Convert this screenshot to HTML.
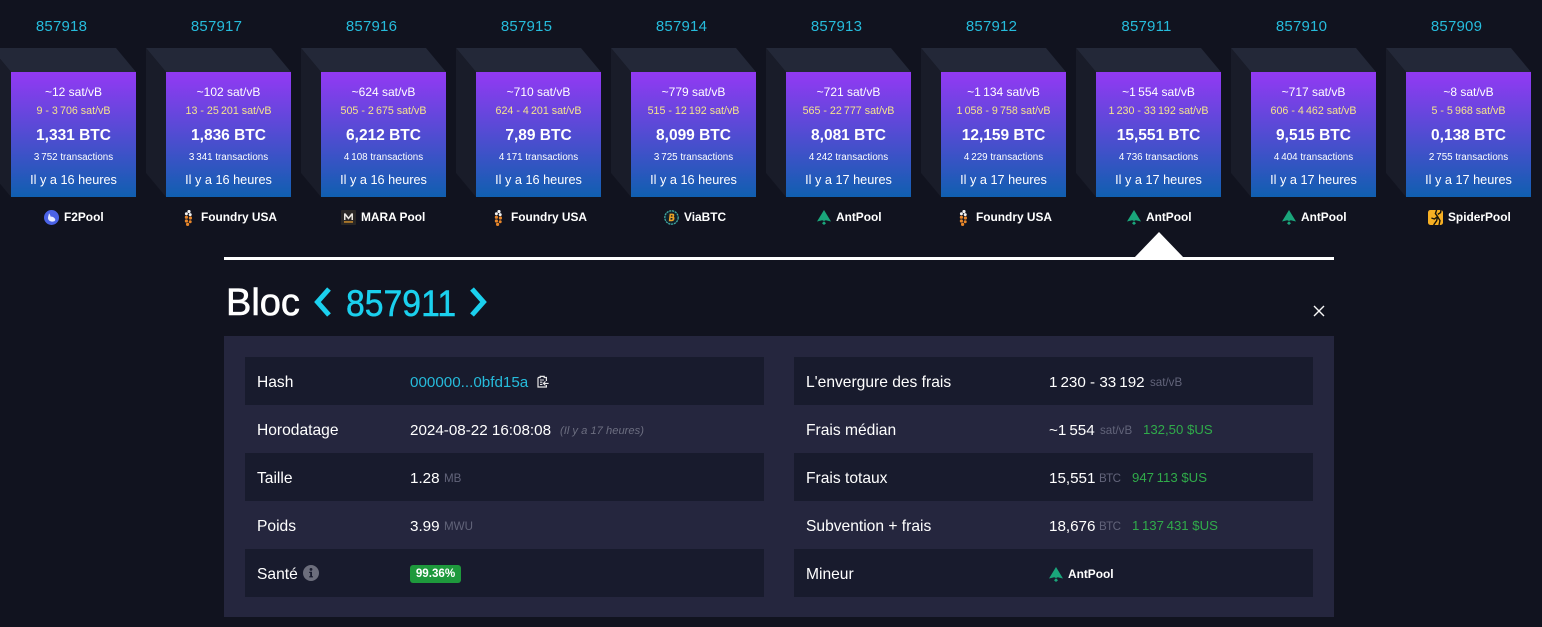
<!DOCTYPE html>
<html lang="fr">
<head>
<meta charset="utf-8">
<title>Bloc 857911</title>
<style>
html,body{margin:0;padding:0;background:#11131f;}
body{position:relative;width:1542px;height:627px;overflow:hidden;font-family:"Liberation Sans",sans-serif;color:#fff;}
.b{position:absolute;top:0;width:145px;height:230px;}
.b svg.c{position:absolute;left:0;top:48px;}
.n{position:absolute;left:0;width:141px;top:18px;line-height:18px;text-align:center;font-size:15px;letter-spacing:.2px;color:#26bcdc;}
.f{position:absolute;left:20px;top:72px;width:125px;height:125px;background:linear-gradient(#9339f4,#105fb0);text-align:center;}
.f div{position:absolute;left:-5px;right:-5px;white-space:nowrap;text-align:center;}
.a{top:12px;line-height:16px;font-size:12px;}
.r{top:31px;line-height:16px;font-size:10.7px;color:#f4e58c;}
.m{top:54px;line-height:20px;font-size:15.5px;font-weight:bold;}
.x{top:79px;line-height:14px;font-size:9.8px;}
.w{top:100px;line-height:16px;font-size:12.7px;}
.pn{position:absolute;top:209px;line-height:16px;font-size:11.9px;font-weight:bold;white-space:nowrap;}
.ic{position:absolute;}
.s{position:absolute;white-space:nowrap;line-height:20px;}
.row{position:absolute;width:519px;height:48px;background:#181b2d;}
.l{font-size:15.6px;color:#fff;margin-top:2px;}
.v{font-size:15.2px;color:#fff;margin-top:2px;}
.u{font-size:11.6px;color:#62647a;margin-top:1px;}
.t{letter-spacing:-.6px;}
.g{font-size:13.2px;color:#30ab4a;margin-top:1px;}
</style>
</head>
<body>
<svg width="0" height="0" style="position:absolute">
<defs>
<symbol id="ant" viewBox="0 0 14 15"><path d="M7 0L14 11.5L8.8 10.2L7 11L5.2 10.2L0 11.5Z" fill="#1aa67b"/><path d="M7 11.2L9 13.2L7 15L5 13.2Z" fill="#1aa67b"/></symbol>
<symbol id="fou" viewBox="0 0 9 16"><g fill="#f1f1f1"><circle cx="5" cy="1.5" r="1.6"/><circle cx="2.4" cy="3.8" r="1.5"/><circle cx="6.2" cy="4.6" r="1.5"/></g><g fill="#e8862a"><circle cx="2.4" cy="7.2" r="1.6"/><circle cx="6.4" cy="8" r="1.6"/><circle cx="2.4" cy="11" r="1.6"/><circle cx="6.2" cy="11.8" r="1.5"/><circle cx="3.6" cy="14.4" r="1.6"/></g></symbol>
<symbol id="f2" viewBox="0 0 15 15"><circle cx="7.5" cy="7.5" r="7.5" fill="#4a62e6"/><path d="M5 3.2C6 4.4 6.4 5.6 6.6 6.6C8.4 6.4 10.6 7.4 11.2 9.4C11.6 10.8 10.2 11.6 8.6 11.6C6.2 11.6 4.2 10.4 4 8.2C3.9 6.8 4.6 5.6 5 3.2Z" fill="#e8ecff"/></symbol>
<symbol id="mara" viewBox="0 0 15 15"><rect width="15" height="15" rx="1" fill="#2a2725"/><path d="M3 10V3.4H4.6L7.5 7.2L10.4 3.4H12V10H10.5V6L7.5 9.6L4.5 6V10Z" fill="#e9e6e0"/><rect x="3" y="11.2" width="9" height="1.5" fill="#c8892c"/></symbol>
<symbol id="via" viewBox="0 0 15 15"><circle cx="7.5" cy="7.5" r="6.7" fill="#10202a" stroke="#3fa6a0" stroke-width="1.3" stroke-dasharray="2.2 .7"/><path d="M5.6 3.6H8.6C10.2 3.6 10.8 5 9.8 6.6C11 7.2 10.8 11.2 8 11.2H4.8Z" fill="#e9a024"/><path d="M7 5.2L6.8 6.6H8C8.8 6.6 8.8 5.2 8 5.2ZM6.6 8L6.4 9.6H7.8C8.9 9.6 8.9 8 7.8 8Z" fill="#10202a"/></symbol>
<symbol id="spi" viewBox="0 0 15 15"><rect width="15" height="15" rx="2.4" fill="#f7b024"/><path d="M8.6 0L7.4 3.6L9.6 6.6L6.4 9L3.4 8M9.6 6.6L8.6 10.8L5.6 15M9.6 6.6L12 10.6L11 15M9.8 4.4L12.6 2.6L13 0" fill="none" stroke="#17130a" stroke-width="1.4"/></symbol>
</defs>
</svg>

<div class="b" style="left:-9px"><div class="n">857918</div><svg class="c" width="145" height="149"><polygon points="0,0 125,0 145,24 20,24" fill="#232838"/><polygon points="0,0 20,24 20,149 0,125" fill="#191c29"/></svg><div class="f"><div class="a">~12 sat/vB</div><div class="r">9 - 3&#8201;706 sat/vB</div><div class="m">1,331 BTC</div><div class="x">3&#8201;752 transactions</div><div class="w">Il y a 16 heures</div></div></div>
<div class="b" style="left:146px"><div class="n">857917</div><svg class="c" width="145" height="149"><polygon points="0,0 125,0 145,24 20,24" fill="#232838"/><polygon points="0,0 20,24 20,149 0,125" fill="#191c29"/></svg><div class="f"><div class="a">~102 sat/vB</div><div class="r">13 - 25&#8201;201 sat/vB</div><div class="m">1,836 BTC</div><div class="x">3&#8201;341 transactions</div><div class="w">Il y a 16 heures</div></div></div>
<div class="b" style="left:301px"><div class="n">857916</div><svg class="c" width="145" height="149"><polygon points="0,0 125,0 145,24 20,24" fill="#232838"/><polygon points="0,0 20,24 20,149 0,125" fill="#191c29"/></svg><div class="f"><div class="a">~624 sat/vB</div><div class="r">505 - 2&#8201;675 sat/vB</div><div class="m">6,212 BTC</div><div class="x">4&#8201;108 transactions</div><div class="w">Il y a 16 heures</div></div></div>
<div class="b" style="left:456px"><div class="n">857915</div><svg class="c" width="145" height="149"><polygon points="0,0 125,0 145,24 20,24" fill="#232838"/><polygon points="0,0 20,24 20,149 0,125" fill="#191c29"/></svg><div class="f"><div class="a">~710 sat/vB</div><div class="r">624 - 4&#8201;201 sat/vB</div><div class="m">7,89 BTC</div><div class="x">4&#8201;171 transactions</div><div class="w">Il y a 16 heures</div></div></div>
<div class="b" style="left:611px"><div class="n">857914</div><svg class="c" width="145" height="149"><polygon points="0,0 125,0 145,24 20,24" fill="#232838"/><polygon points="0,0 20,24 20,149 0,125" fill="#191c29"/></svg><div class="f"><div class="a">~779 sat/vB</div><div class="r">515 - 12&#8201;192 sat/vB</div><div class="m">8,099 BTC</div><div class="x">3&#8201;725 transactions</div><div class="w">Il y a 16 heures</div></div></div>
<div class="b" style="left:766px"><div class="n">857913</div><svg class="c" width="145" height="149"><polygon points="0,0 125,0 145,24 20,24" fill="#232838"/><polygon points="0,0 20,24 20,149 0,125" fill="#191c29"/></svg><div class="f"><div class="a">~721 sat/vB</div><div class="r">565 - 22&#8201;777 sat/vB</div><div class="m">8,081 BTC</div><div class="x">4&#8201;242 transactions</div><div class="w">Il y a 17 heures</div></div></div>
<div class="b" style="left:921px"><div class="n">857912</div><svg class="c" width="145" height="149"><polygon points="0,0 125,0 145,24 20,24" fill="#232838"/><polygon points="0,0 20,24 20,149 0,125" fill="#191c29"/></svg><div class="f"><div class="a">~1&#8201;134 sat/vB</div><div class="r">1&#8201;058 - 9&#8201;758 sat/vB</div><div class="m">12,159 BTC</div><div class="x">4&#8201;229 transactions</div><div class="w">Il y a 17 heures</div></div></div>
<div class="b" style="left:1076px"><div class="n">857911</div><svg class="c" width="145" height="149"><polygon points="0,0 125,0 145,24 20,24" fill="#232838"/><polygon points="0,0 20,24 20,149 0,125" fill="#191c29"/></svg><div class="f"><div class="a">~1&#8201;554 sat/vB</div><div class="r">1&#8201;230 - 33&#8201;192 sat/vB</div><div class="m">15,551 BTC</div><div class="x">4&#8201;736 transactions</div><div class="w">Il y a 17 heures</div></div></div>
<div class="b" style="left:1231px"><div class="n">857910</div><svg class="c" width="145" height="149"><polygon points="0,0 125,0 145,24 20,24" fill="#232838"/><polygon points="0,0 20,24 20,149 0,125" fill="#191c29"/></svg><div class="f"><div class="a">~717 sat/vB</div><div class="r">606 - 4&#8201;462 sat/vB</div><div class="m">9,515 BTC</div><div class="x">4&#8201;404 transactions</div><div class="w">Il y a 17 heures</div></div></div>
<div class="b" style="left:1386px"><div class="n">857909</div><svg class="c" width="145" height="149"><polygon points="0,0 125,0 145,24 20,24" fill="#232838"/><polygon points="0,0 20,24 20,149 0,125" fill="#191c29"/></svg><div class="f"><div class="a">~8 sat/vB</div><div class="r">5 - 5&#8201;968 sat/vB</div><div class="m">0,138 BTC</div><div class="x">2&#8201;755 transactions</div><div class="w">Il y a 17 heures</div></div></div>

<svg class="ic" style="left:44px;top:210px" width="15" height="15"><use href="#f2"/></svg><div class="pn" style="left:64px">F2Pool</div>
<svg class="ic" style="left:184px;top:210px" width="9" height="16"><use href="#fou"/></svg><div class="pn" style="left:201px">Foundry USA</div>
<svg class="ic" style="left:341px;top:210px" width="15" height="15"><use href="#mara"/></svg><div class="pn" style="left:361px">MARA Pool</div>
<svg class="ic" style="left:494px;top:210px" width="9" height="16"><use href="#fou"/></svg><div class="pn" style="left:511px">Foundry USA</div>
<svg class="ic" style="left:664px;top:210px" width="15" height="15"><use href="#via"/></svg><div class="pn" style="left:684px">ViaBTC</div>
<svg class="ic" style="left:817px;top:210px" width="14" height="15"><use href="#ant"/></svg><div class="pn" style="left:836px">AntPool</div>
<svg class="ic" style="left:959px;top:210px" width="9" height="16"><use href="#fou"/></svg><div class="pn" style="left:976px">Foundry USA</div>
<svg class="ic" style="left:1127px;top:210px" width="14" height="15"><use href="#ant"/></svg><div class="pn" style="left:1146px">AntPool</div>
<svg class="ic" style="left:1282px;top:210px" width="14" height="15"><use href="#ant"/></svg><div class="pn" style="left:1301px">AntPool</div>
<svg class="ic" style="left:1428px;top:210px" width="15" height="15"><use href="#spi"/></svg><div class="pn" style="left:1448px">SpiderPool</div>

<svg class="ic" style="left:1134px;top:232px" width="50" height="26"><polygon points="25,0 50,26 0,26" fill="#fff"/></svg>
<div style="position:absolute;left:224px;top:257px;width:1110px;height:3px;background:#fff"></div>

<div class="s" style="left:226px;top:281px;line-height:44px;font-size:38px;-webkit-text-stroke:.6px #fff">Bloc</div>
<svg class="ic" style="left:312px;top:286px" width="22" height="32"><polyline points="17,3 5.5,16 17,29" fill="none" stroke="#1bd0ee" stroke-width="5"/></svg>
<div class="s" style="left:346px;top:281px;line-height:44px;font-size:37.5px;color:#1bd0ee;-webkit-text-stroke:.5px #1bd0ee;transform:scaleX(.9);transform-origin:0 50%">857911</div>
<svg class="ic" style="left:467px;top:286px" width="22" height="32"><polyline points="5,3 16.5,16 5,29" fill="none" stroke="#1bd0ee" stroke-width="5"/></svg>
<svg class="ic" style="left:1313px;top:305px" width="12" height="12"><path d="M1 1L11 11M11 1L1 11" stroke="#f8f8f8" stroke-width="1.4" fill="none"/></svg>

<div style="position:absolute;left:224px;top:336px;width:1110px;height:281px;background:#25263e"></div>
<div class="row" style="left:245px;top:357px"></div>
<div class="row" style="left:245px;top:453px"></div>
<div class="row" style="left:245px;top:549px"></div>
<div class="row" style="left:794px;top:357px"></div>
<div class="row" style="left:794px;top:453px"></div>
<div class="row" style="left:794px;top:549px"></div>

<div class="s l" style="left:257px;top:371px">Hash</div>
<div class="s v" style="left:410px;top:371px;color:#26bcdc">000000...0bfd15a</div>
<svg class="ic" style="left:537px;top:375px" width="12" height="13" viewBox="0 0 12 13"><path d="M1 2.5H3.2V1.4H7.2V2.5H9.4V6M9.4 10V12H1V2.5" fill="none" stroke="#e6e6e6" stroke-width="1.2"/><path d="M3 5H7M3 7.2H5.4M3 9.4H5.4M6.4 8.4H11.6M8.4 6.4L6.4 8.4L8.4 10.4" fill="none" stroke="#e6e6e6" stroke-width="1.1"/></svg>

<div class="s l" style="left:257px;top:419px">Horodatage</div>
<div class="s v" style="left:410px;top:419px">2024-08-22 16:08:08</div>
<div class="s" style="left:560px;top:421px;font-size:11.2px;font-style:italic;color:#6c6e80">(Il y a 17 heures)</div>

<div class="s l" style="left:257px;top:467px">Taille</div>
<div class="s v" style="left:410px;top:467px">1.28</div>
<div class="s u" style="left:444px;top:468px">MB</div>

<div class="s l" style="left:257px;top:515px">Poids</div>
<div class="s v" style="left:410px;top:515px">3.99</div>
<div class="s u" style="left:444px;top:516px">MWU</div>

<div class="s l" style="left:257px;top:563px">Santé</div>
<svg class="ic" style="left:303px;top:565px" width="16" height="16" viewBox="0 0 16 16"><circle cx="8" cy="8" r="8" fill="#6c6e7c"/><circle cx="8" cy="4.4" r="1.4" fill="#181b2d"/><path d="M6.2 6.8H9V11.2H10V12.4H6.2V11.2H7.2V8H6.2Z" fill="#181b2d"/></svg>
<div style="position:absolute;left:410px;top:565px;width:51px;height:18px;border-radius:3px;background:#1e993c;color:#fff;font-size:11.6px;font-weight:bold;line-height:18px;text-align:center">99.36%</div>

<div class="s l" style="left:806px;top:371px">L'envergure des frais</div>
<div class="s v" style="left:1049px;top:371px">1&#8201;230 - 33&#8201;192</div>
<div class="s u" style="left:1150px;top:372px">sat/vB</div>

<div class="s l" style="left:806px;top:419px">Frais médian</div>
<div class="s v" style="left:1049px;top:419px">~1&#8201;554</div>
<div class="s u" style="left:1100px;top:420px">sat/vB</div>
<div class="s g" style="left:1143px;top:419px">132,50 $US</div>

<div class="s l" style="left:806px;top:467px">Frais totaux</div>
<div class="s v" style="left:1049px;top:467px">15,551</div>
<div class="s u t" style="left:1099px;top:468px">BTC</div>
<div class="s g" style="left:1132px;top:467px">947&#8201;113 $US</div>

<div class="s l" style="left:806px;top:515px">Subvention + frais</div>
<div class="s v" style="left:1049px;top:515px">18,676</div>
<div class="s u t" style="left:1099px;top:516px">BTC</div>
<div class="s g" style="left:1132px;top:515px">1&#8201;137&#8201;431 $US</div>

<div class="s l" style="left:806px;top:563px">Mineur</div>
<svg class="ic" style="left:1049px;top:567px" width="14" height="15"><use href="#ant"/></svg>
<div class="pn" style="left:1068px;top:566px">AntPool</div>
</body>
</html>
